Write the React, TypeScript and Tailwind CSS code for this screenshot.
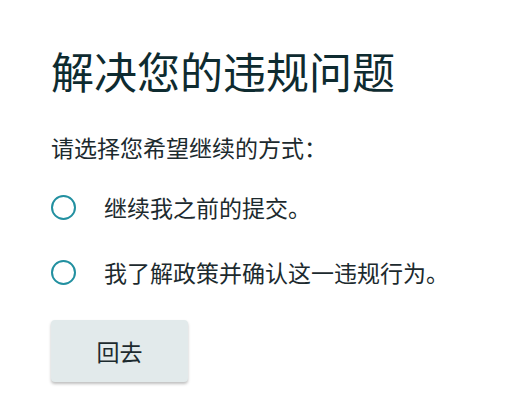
export default function App() {
  const options = ['继续我之前的提交。', '我了解政策并确认这一违规行为。']

  return (
    <div
      className="min-h-[414px] w-[520px] bg-white pl-[51px] pt-[44px]"
      style={{ fontFamily: '"Noto Sans CJK SC", "Noto Sans", sans-serif' }}
    >
      <h1 className="text-[43px] leading-[52px] font-normal text-[#0e2b30]">解决您的违规问题</h1>

      <p className="mt-[35px] text-[23px] leading-[32px] text-[#1c2a2e]">请选择您希望继续的方式：</p>

      <div className="mt-[28px] flex flex-col gap-[33px]">
        {options.map((o) => (
          <label key={o} className="flex items-center gap-[28px] cursor-pointer">
            <span className="h-[25px] w-[25px] shrink-0 rounded-full border-2 border-[#2290a0] bg-white" />
            <span className="text-[23px] leading-[32px] text-[#1c2a2e]">{o}</span>
          </label>
        ))}
      </div>

      <button className="mt-[32px] h-[62px] w-[137px] rounded-[4px] bg-[#e2eaeb] text-[23px] text-[#1c2a2e] shadow-[0_2px_3px_rgba(0,0,0,0.25)]">
        回去
      </button>
    </div>
  )
}
